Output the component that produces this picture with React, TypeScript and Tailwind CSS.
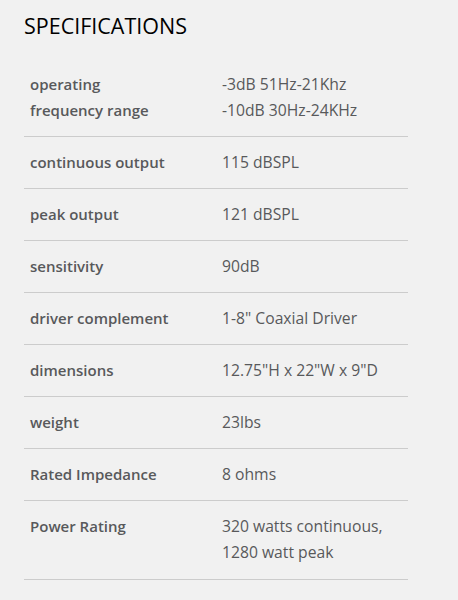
import React from "react";

const rows: [string, string[]][] = [
  ["operating\nfrequency range", ["-3dB 51Hz-21Khz", "-10dB 30Hz-24KHz"]],
  ["continuous output", ["115 dBSPL"]],
  ["peak output", ["121 dBSPL"]],
  ["sensitivity", ["90dB"]],
  ["driver complement", ['1-8" Coaxial Driver']],
  ["dimensions", ['12.75"H x 22"W x 9"D']],
  ["weight", ["23lbs"]],
  ["Rated Impedance", ["8 ohms"]],
  ["Power Rating", ["320 watts continuous,", "1280 watt peak"]],
];

export default function App() {
  return (
    <div className="w-[458px] h-[600px] bg-[#f1f1f1] overflow-hidden" style={{ fontFamily: "'Open Sans', sans-serif" }}>
      <div className="pl-[24px] pt-[12px] w-[408px]">
        <h2 className="text-[21.5px] leading-[28px] text-black font-normal">SPECIFICATIONS</h2>
        <div className="mt-[19px]">
          {rows.map(([label, vals], i) => (
            <div key={i} className={`flex border-b border-[#cccccc] pt-[12px] text-[15px] leading-[26px] text-[#58595b] ${i === rows.length - 1 ? "pb-[14px]" : "pb-[13px]"}`}>
              <div className="w-1/2 pl-[6px] font-semibold whitespace-pre-line">{label}</div>
              <div className="w-1/2 pl-[6px] text-[15.7px]">
                {vals.map((v, j) => (
                  <div key={j}>{v}</div>
                ))}
              </div>
            </div>
          ))}
        </div>
      </div>
    </div>
  );
}
